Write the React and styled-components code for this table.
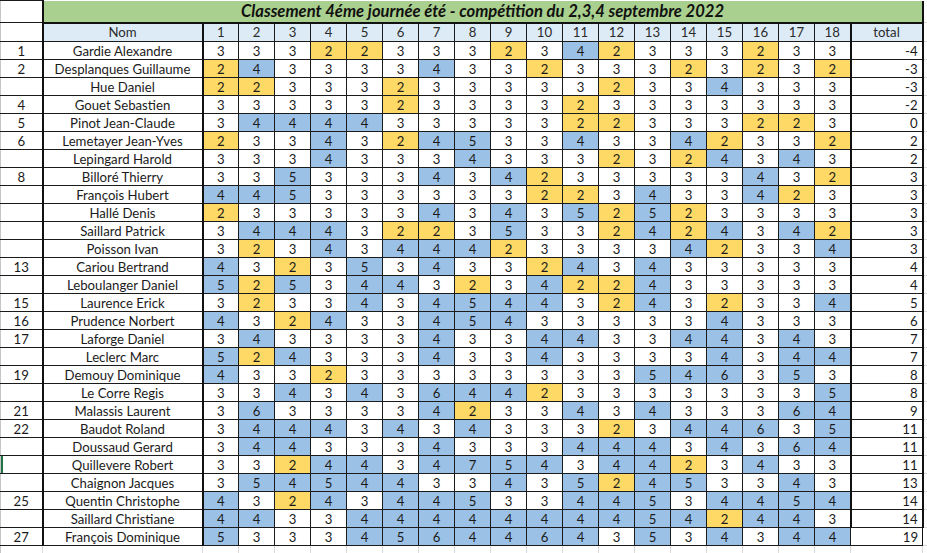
import React from 'react';
import styled, { createGlobalStyle } from 'styled-components';

const GlobalStyle = createGlobalStyle`
  html, body {
    margin: 0;
    padding: 0;
    background: #ffffff;
    overflow: hidden;
  }
`;

const Sheet = styled.div`
  width: 927px;
  height: 553px;
  overflow: hidden;
  background: #ffffff;
`;

const Grid = styled.table`
  border-collapse: collapse;
  table-layout: fixed;
  width: 952px;
  font-family: Lato, "Liberation Sans", sans-serif;
  font-size: 13.2px;
  color: #1b1b1b;

  td {
    padding: 0;
    white-space: nowrap;
    overflow: hidden;
    line-height: 16px;
  }
`;

const TitleRow = styled.tr`
  height: 22px;
`;

const HeadRow = styled.tr`
  height: 19px;
`;

const DataRow = styled.tr`
  height: 18px;
`;

const SpillRow = styled.tr`
  height: 18px;
`;

const RankCell = styled.td`
  text-align: center;
  border-left: 1px solid #c6c6c6;
  border-top: 1px solid #1b1b1b;
  border-bottom: 1px solid #1b1b1b;
  border-right: 2px solid #111;
  box-shadow: ${(p) => (p.$marked ? 'inset 2px 0 0 #217346' : 'none')};
`;

const TitleCell = styled.td`
  background: #a9d08e;
  text-align: center;
  font-style: italic;
  font-weight: 700;
  font-size: 16.6px;
  color: #111;
  border-bottom: 2px solid #111;
  border-right: 2px solid #111;
  border-left: 2px solid #111;
`;

const HeadCell = styled.td`
  background: #ddebf7;
  text-align: center;
  border: 1px solid #1b1b1b;
  border-right: ${(p) => (p.$thick ? '2px solid #111' : '1px solid #1b1b1b')};
  color: #2b2b2b;
`;

const NameCell = styled.td`
  text-align: center;
  border: 1px solid #1b1b1b;
  border-right: 2px solid #111;
`;

const tones = {
  under: '#ffd966',
  par: '#ffffff',
  over: '#9bc2e6',
};

const ScoreCell = styled.td`
  text-align: center;
  border: 1px solid #1b1b1b;
  background: ${(p) => tones[p.$tone]};
`;

const TotalCell = styled.td`
  text-align: ${(p) => (p.$head ? 'center' : 'right')};
  padding-right: ${(p) => (p.$head ? '0' : '4px')} !important;
  background: ${(p) => (p.$head ? '#ddebf7' : '#ffffff')};
  border: 1px solid #1b1b1b;
  border-left: ${(p) => (p.$last ? '1px' : '2px')} solid #111;
  border-right: ${(p) => (p.$last ? '1px' : '2px')} solid #111;
  color: ${(p) => (p.$head ? '#2b2b2b' : '#1b1b1b')};
`;

const SpillCell = styled.td`
  border-bottom: 1px solid #dadada;
`;

const BlankCell = styled.td`
  border-right: 1px solid #dadada;
  border-left: ${(p) => (p.$edge ? '1px solid #c6c6c6' : 'none')};
`;

const rows = [
  ['1', 'Gardie Alexandre', '333223332342333233', -4],
  ['2', 'Desplanques Guillaume', '243333433233323232', -3],
  ['', 'Hue Daniel', '223332333332334333', -3],
  ['4', 'Gouet Sebastien', '333332333323333333', -2],
  ['5', 'Pinot Jean-Claude', '344443333322333223', 0],
  ['6', 'Lemetayer Jean-Yves', '233432453343342332', 2],
  ['', 'Lepingard Harold', '333433343332324343', 2],
  ['8', 'Billoré Thierry', '335333434233333432', 3],
  ['', 'François Hubert', '445333333223433423', 3],
  ['', 'Hallé Denis', '233333434352523333', 3],
  ['', 'Saillard Patrick', '344432235332424342', 3],
  ['', 'Poisson Ivan', '323434442333342334', 3],
  ['13', 'Cariou Bertrand', '432353433243433333', 4],
  ['', 'Leboulanger Daniel', '525344323422433333', 4],
  ['15', 'Laurence Erick', '323343454432432334', 5],
  ['16', 'Prudence Norbert', '432433454333334333', 6],
  ['17', 'Laforge Daniel', '343333433443344343', 7],
  ['', 'Leclerc Marc', '524333433433334344', 7],
  ['19', 'Demouy Dominique', '433233333333546353', 8],
  ['', 'Le Corre Regis', '334343644233333335', 8],
  ['21', 'Malassis Laurent', '363333423343433364', 9],
  ['22', 'Baudot Roland', '344434343332344635', 11],
  ['', 'Doussaud Gerard', '344333433344434364', 11],
  ['', 'Quillevere Robert', '332443475434423433', 11],
  ['', 'Chaignon Jacques', '354544334352453343', 13],
  ['25', 'Quentin Christophe', '432434453344534454', 14],
  ['', 'Saillard Christiane', '443344444444542443', 14],
  ['27', 'François Dominique', '533345644643534344', 19],
];

const holes = Array.from({ length: 18 }, (_, i) => i + 1);

const toneOf = (n) => (n < 3 ? 'under' : n > 3 ? 'over' : 'par');

function App() {
  return (
    <Sheet>
      <GlobalStyle />
      <Grid>
        <colgroup>
          <col style={{ width: 42 }} />
          <col style={{ width: 160 }} />
          {holes.map((h) => (
            <col key={h} style={{ width: 36 }} />
          ))}
          <col style={{ width: 72 }} />
          <col style={{ width: 30 }} />
        </colgroup>
        <tbody>
          <TitleRow>
            <RankCell />
            <TitleCell colSpan={20}>
              Classement 4éme journée été - compétition du 2,3,4 septembre 2022
            </TitleCell>
            <SpillCell />
          </TitleRow>
          <HeadRow>
            <RankCell />
            <HeadCell $thick>Nom</HeadCell>
            {holes.map((h) => (
              <HeadCell key={h}>{h}</HeadCell>
            ))}
            <TotalCell $head>total</TotalCell>
            <SpillCell />
          </HeadRow>
          {rows.map(([rank, name, scores, total], i) => (
            <DataRow key={name}>
              <RankCell $marked={name === 'Quillevere Robert'}>{rank}</RankCell>
              <NameCell>{name}</NameCell>
              {scores.split('').map((s, j) => (
                <ScoreCell key={j} $tone={toneOf(Number(s))}>
                  {s}
                </ScoreCell>
              ))}
              <TotalCell $last={i === rows.length - 1}>{total}</TotalCell>
              <SpillCell />
            </DataRow>
          ))}
          <SpillRow>
            <BlankCell $edge />
            <BlankCell />
            {holes.map((h) => (
              <BlankCell key={h} />
            ))}
            <BlankCell />
            <BlankCell />
          </SpillRow>
        </tbody>
      </Grid>
    </Sheet>
  );
}

export default App;
